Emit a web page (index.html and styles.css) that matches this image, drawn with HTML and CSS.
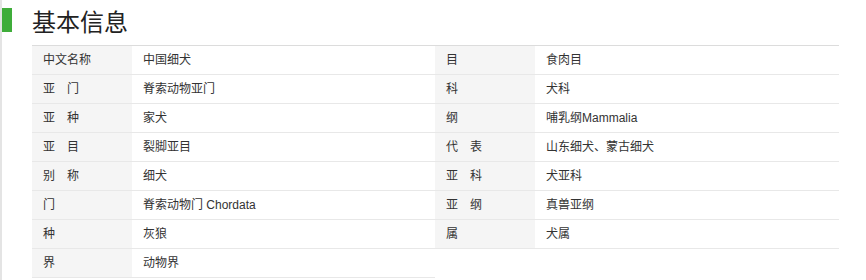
FILE: index.html
```html
<!DOCTYPE html>
<html lang="zh">
<head>
<meta charset="utf-8">
<title>基本信息</title>
<link rel="stylesheet" href="styles.css">
</head>
<body>
<div class="page">
  <div class="heading">
    <span class="bar"></span>
    <h2 class="title">基本信息</h2>
  </div>
  <div class="info">
    <div class="cell label">中文名称</div><div class="cell value">中国细犬</div><div class="cell label">目</div><div class="cell value">食肉目</div>
    <div class="cell label">亚　门</div><div class="cell value">脊索动物亚门</div><div class="cell label">科</div><div class="cell value">犬科</div>
    <div class="cell label">亚　种</div><div class="cell value">家犬</div><div class="cell label">纲</div><div class="cell value">哺乳纲Mammalia</div>
    <div class="cell label">亚　目</div><div class="cell value">裂脚亚目</div><div class="cell label">代　表</div><div class="cell value">山东细犬、蒙古细犬</div>
    <div class="cell label">别　称</div><div class="cell value">细犬</div><div class="cell label">亚　科</div><div class="cell value">犬亚科</div>
    <div class="cell label">门</div><div class="cell value">脊索动物门 Chordata</div><div class="cell label">亚　纲</div><div class="cell value">真兽亚纲</div>
    <div class="cell label">种</div><div class="cell value">灰狼</div><div class="cell label">属</div><div class="cell value">犬属</div>
    <div class="cell label">界</div><div class="cell value">动物界</div><div class="cell empty"></div><div class="cell empty"></div>
  </div>
</div>
</body>
</html>
```

FILE: styles.css
```css
html, body {
  margin: 0;
  padding: 0;
  background: #ffffff;
}
body {
  font-family: "Liberation Sans", Arial, "Noto Sans CJK SC", sans-serif;
  color: #333333;
}
.page {
  border-left: 2px solid #e4e4e4;
  height: 280px;
  box-sizing: border-box;
}
.heading {
  display: flex;
  align-items: flex-start;
  height: 45px;
}
.bar {
  width: 10px;
  height: 24px;
  margin-top: 8px;
  background: #3fad3a;
}
.title {
  margin: 0 0 0 20px;
  font-family: "Noto Sans CJK SC", sans-serif;
  font-weight: normal;
  font-size: 24px;
  line-height: 41px;
  color: #222222;
}
.info {
  margin-left: 30px;
  width: 807px;
  display: grid;
  grid-template-columns: 100px 303px 100px 304px;
  border-top: 1px solid #dcdcdc;
}
.cell {
  height: 28px;
  line-height: 28px;
  border-bottom: 1px solid #e8e8e8;
  padding-left: 11px;
  font-size: 12px;
  font-family: "Liberation Sans", Arial, "Noto Sans CJK SC", sans-serif;
  color: #333333;
  white-space: nowrap;
}
.label {
  background: #f5f5f5;
  color: #333333;
}
.value {
  background: #ffffff;
}
.empty {
  border-bottom: none;
  background: #ffffff;
}
```
